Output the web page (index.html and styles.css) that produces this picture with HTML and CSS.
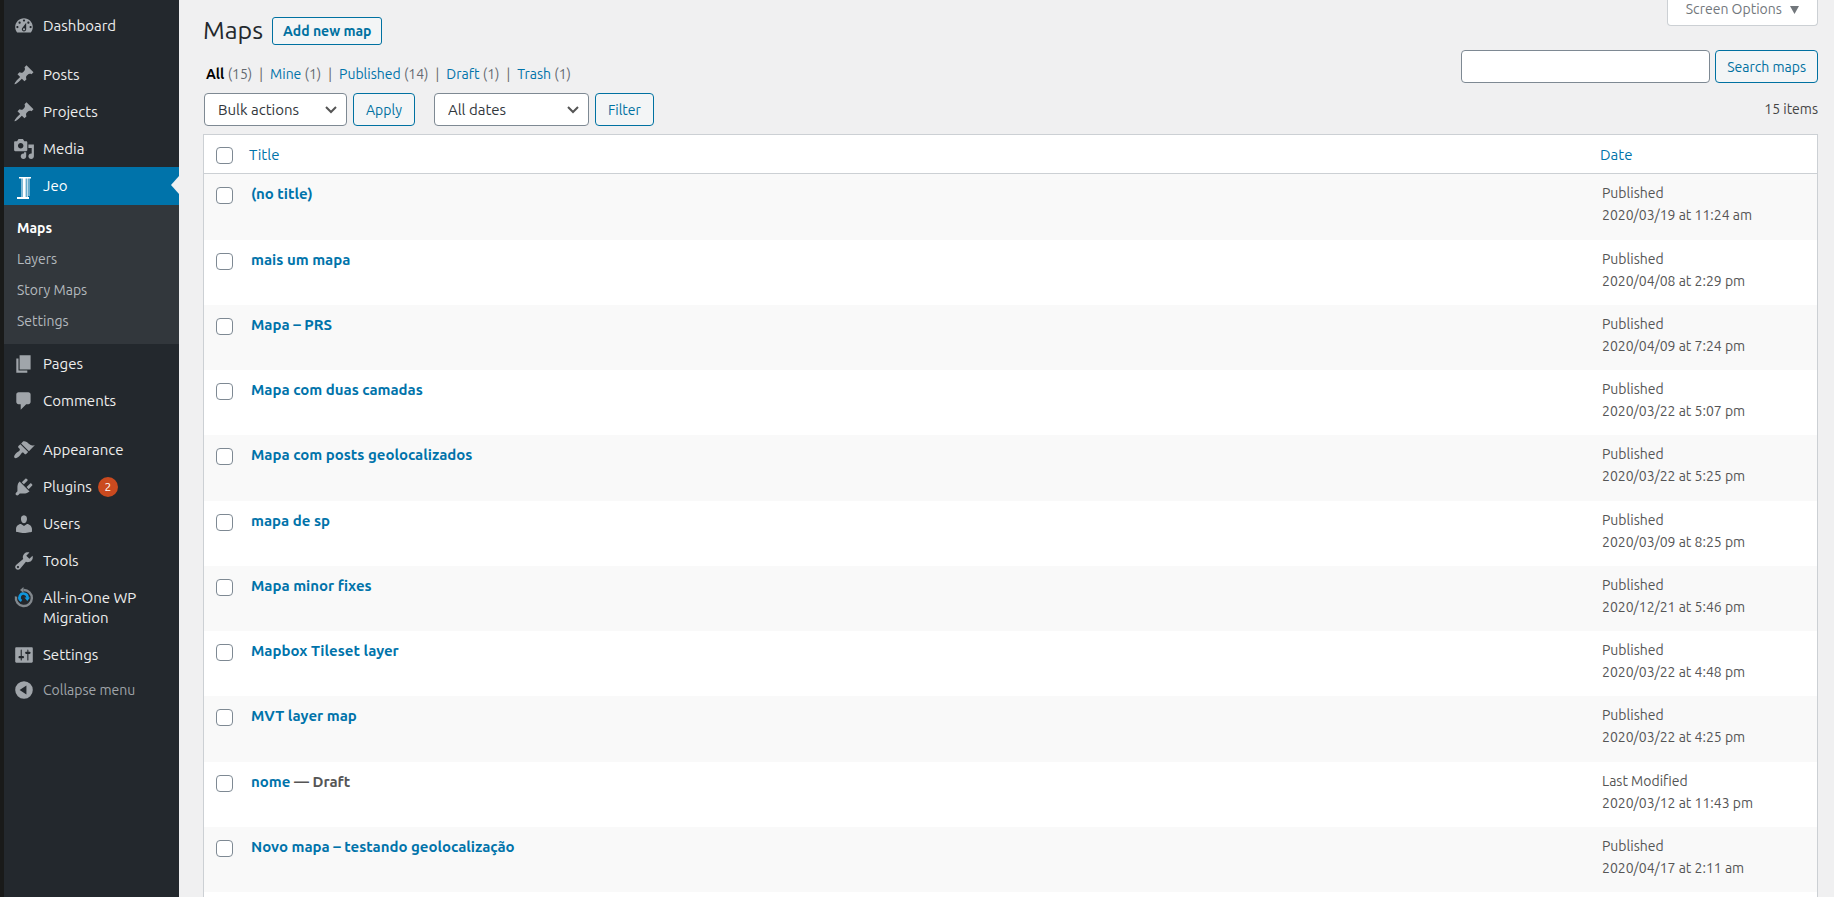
FILE: index.html
```html
<!DOCTYPE html>
<html lang="en">
<head>
<meta charset="utf-8">
<title>Maps</title>
<link rel="stylesheet" href="styles.css">
</head>
<body>
<div class="shell">
  <nav class="sidebar" aria-label="Main menu">
    <ul class="menu">
      <li><a class="menu-link" href="#"><svg class="icon" viewBox="0 0 20 20"><path d="M3.76 16h12.48c1.1-1.37 1.76-3.11 1.76-5 0-4.42-3.58-8-8-8s-8 3.58-8 8c0 1.89.66 3.63 1.76 5zM10 4c.55 0 1 .45 1 1s-.45 1-1 1-1-.45-1-1 .45-1 1-1zM6 6c.55 0 1 .45 1 1s-.45 1-1 1-1-.45-1-1 .45-1 1-1zm8 0c.55 0 1 .45 1 1s-.45 1-1 1-1-.45-1-1 .45-1 1-1zm-5.37 5.55L12 7v6c0 1.1-.9 2-2 2s-2-.9-2-2c0-.57.24-1.08.63-1.45zM4 10c.55 0 1 .45 1 1s-.45 1-1 1-1-.45-1-1 .45-1 1-1zm12 0c.55 0 1 .45 1 1s-.45 1-1 1-1-.45-1-1 .45-1 1-1zm-5 3c0-.55-.45-1-1-1s-1 .45-1 1 .45 1 1 1 1-.45 1-1z"/></svg><span>Dashboard</span></a></li>
      <li class="separated"><a class="menu-link" href="#"><svg class="icon" viewBox="0 0 20 20"><path d="M10.44 3.02l1.82-1.82 6.36 6.35-1.83 1.82c-1.05-.68-2.48-.57-3.41.36l-.75.75c-.92.93-1.04 2.35-.35 3.41l-1.83 1.82-2.41-2.41-2.8 2.79c-.42.42-3.38 2.71-3.8 2.29s1.86-3.39 2.28-3.81l2.79-2.79L4.1 9.36l1.83-1.82c1.05.69 2.48.57 3.4-.36l.75-.75c.93-.92 1.05-2.35.36-3.41z"/></svg><span>Posts</span></a></li>
      <li><a class="menu-link" href="#"><svg class="icon" viewBox="0 0 20 20"><path d="M10.44 3.02l1.82-1.82 6.36 6.35-1.83 1.82c-1.05-.68-2.48-.57-3.41.36l-.75.75c-.92.93-1.04 2.35-.35 3.41l-1.83 1.82-2.41-2.41-2.8 2.79c-.42.42-3.38 2.71-3.8 2.29s1.86-3.39 2.28-3.81l2.79-2.79L4.1 9.36l1.83-1.82c1.05.69 2.48.57 3.4-.36l.75-.75c.93-.92 1.05-2.35.36-3.41z"/></svg><span>Projects</span></a></li>
      <li><a class="menu-link" href="#"><svg class="icon" viewBox="0 0 20 20"><path d="M13 11V4c0-.55-.45-1-1-1h-1.67L9 1H5L3.67 3H2c-.55 0-1 .45-1 1v7c0 .55.45 1 1 1h10c.55 0 1-.45 1-1zM7 4.5c1.38 0 2.5 1.12 2.5 2.5S8.38 9.5 7 9.5 4.5 8.38 4.5 7 5.62 4.5 7 4.5zM14 6h5v10.5c0 1.38-1.12 2.5-2.5 2.5S14 17.88 14 16.5s1.12-2.5 2.5-2.5c.17 0 .34.02.5.05V9h-3V6zm-4 8.05V13h2v3.5c0 1.38-1.12 2.5-2.5 2.5S7 17.88 7 16.5 8.12 14 9.5 14c.17 0 .34.02.5.05z"/></svg><span>Media</span></a></li>
      <li>
        <a class="menu-link current" href="#"><svg class="icon" viewBox="0 0 22 24"><g fill="#fff"><path d="M6 2h12v1.500H6zM4 22h12v2H4z"/><path d="M8 3h2v19H8z" opacity=".5"/><path d="M10 3h2v19h-2z"/><path d="M12 3h1v19h-1zM14 3h1v19h-1z" opacity=".75"/><path d="M13 3h1v19h-1zM15 3h2v18h-2z" opacity=".4"/></g></svg><span>Jeo</span></a>
        <ul class="submenu">
          <li><a class="selected" href="#">Maps</a></li>
          <li><a href="#">Layers</a></li>
          <li><a href="#">Story Maps</a></li>
          <li><a href="#">Settings</a></li>
        </ul>
      </li>
      <li><a class="menu-link" href="#"><svg class="icon" viewBox="0 0 20 20"><path d="M6 15V2h10v13H6zm-1 1h8v2H3V5h2v11z"/></svg><span>Pages</span></a></li>
      <li><a class="menu-link" href="#"><svg class="icon" viewBox="0 0 20 20"><path d="M5 2h9c1.1 0 2 .9 2 2v7c0 1.1-.9 2-2 2h-2l-5 5v-5H5c-1.1 0-2-.9-2-2V4c0-1.1.9-2 2-2z"/></svg><span>Comments</span></a></li>
      <li class="separated"><a class="menu-link" href="#"><svg class="icon" viewBox="0 0 20 20"><path d="M14.48 11.06L7.41 3.99l1.5-1.5c.5-.56 2.3-.47 3.51.32 1.21.8 1.43 1.28 2.91 2.1 1.18.64 2.45 1.26 4.45.85zm-.71.71L6.7 4.7 4.93 6.47c-.39.39-.39 1.02 0 1.41l1.06 1.06c.39.39.39 1.03 0 1.42-.6.6-1.43 1.11-2.21 1.69-.35.26-.7.53-1.01.84C1.43 14.23.4 16.08 1.4 17.07c.99 1 2.84-.03 4.18-1.36.31-.31.58-.66.85-1.02.57-.78 1.08-1.61 1.69-2.21.39-.39 1.02-.39 1.41 0l1.06 1.06c.39.39 1.02.39 1.41 0z"/></svg><span>Appearance</span></a></li>
      <li><a class="menu-link" href="#"><svg class="icon" viewBox="0 0 20 20"><path d="M13.11 4.36L9.87 7.6 8 5.73l3.24-3.24c.35-.34 1.05-.2 1.56.32.52.51.66 1.21.31 1.55zm-8 1.77l.91-1.12 9.01 9.01-1.19.84c-.71.71-2.63 1.16-3.82 1.16H6.14L4.9 17.26c-.59.59-1.54.59-2.12 0-.59-.58-.59-1.53 0-2.12l1.24-1.24v-3.88c0-1.13.4-3.19 1.09-3.89zm7.26 3.97l3.24-3.24c.34-.35 1.04-.21 1.55.31.52.51.66 1.21.31 1.55l-3.24 3.25z"/></svg><span>Plugins</span><span class="badge">2</span></a></li>
      <li><a class="menu-link" href="#"><svg class="icon" viewBox="0 0 20 20"><path d="M10 9.25c-2.27 0-2.73-3.44-2.73-3.44C7 4.02 7.82 2 9.97 2c2.16 0 2.98 2.02 2.71 3.81 0 0-.41 3.44-2.68 3.44zm0 2.57L12.72 10c2.39 0 4.52 2.33 4.52 4.53v2.49s-3.65 1.13-7.24 1.13c-3.65 0-7.24-1.13-7.24-1.13v-2.49c0-2.25 1.94-4.48 4.47-4.48z"/></svg><span>Users</span></a></li>
      <li><a class="menu-link" href="#"><svg class="icon" viewBox="0 0 20 20"><path d="M16.68 9.77c-1.34 1.34-3.3 1.67-4.95.99l-5.41 6.52c-.99.99-2.59.99-3.58 0s-.99-2.59 0-3.57l6.52-5.42c-.68-1.65-.35-3.61.99-4.95 1.28-1.28 3.12-1.62 4.72-1.06l-2.89 2.89 2.82 2.82 2.86-2.87c.53 1.58.18 3.39-1.08 4.65zM3.81 16.21c.4.39 1.04.39 1.43 0 .4-.4.4-1.04 0-1.43-.39-.4-1.03-.4-1.43 0-.39.39-.39 1.03 0 1.43z"/></svg><span>Tools</span></a></li>
      <li><a class="menu-link" href="#"><svg class="icon" viewBox="0 0 22 22"><g fill="none"><path d="M10.500 3A8 8 0 1 1 3 9.500" stroke="#82888d" stroke-width="2.400"/><path d="M8.500 14A4 4 0 1 1 14.500 11" stroke="#0e96dc" stroke-width="2.600"/></g><path d="M10.500 0v6L7 3z" fill="#82888d"/><path d="M11.500 10.500h5.500l-2.700 3.500z" fill="#0e96dc"/></svg><span>All-in-One WP Migration</span></a></li>
      <li><a class="menu-link" href="#"><svg class="icon" viewBox="0 0 20 20"><path d="M18 16V4c0-.55-.45-1-1-1H3c-.55 0-1 .45-1 1v12c0 .55.45 1 1 1h14c.55 0 1-.45 1-1zM8 11h1c.55 0 1 .45 1 1s-.45 1-1 1H8v1.5c0 .28-.22.5-.5.5s-.5-.22-.5-.5V13H6c-.55 0-1-.45-1-1s.45-1 1-1h1V5.500c0-.28.22-.5.5-.5s.5.22.5.5V11zm5-2h-1c-.55 0-1-.45-1-1s.45-1 1-1h1V5.500c0-.28.22-.5.5-.5s.5.22.5.5V7h1c.55 0 1 .45 1 1s-.45 1-1 1h-1v5.500c0 .28-.22.5-.5.5s-.5-.22-.5-.5V9z"/></svg><span>Settings</span></a></li>
    </ul>
    <button class="collapse" type="button"><svg class="icon" viewBox="0 0 20 20"><path fill-rule="evenodd" d="M10 2a8 8 0 1 1 0 16 8 8 0 0 1 0-16zm2.200 4L6 10l6.200 4z"/></svg><span>Collapse menu</span></button>
  </nav>

  <main class="content">
    <header class="top">
      <div class="heading">
        <h1>Maps</h1>
        <a class="button add" href="#">Add new map</a>
      </div>
      <button class="screen-options" type="button">Screen Options <svg class="caret" viewBox="0 0 9 8"><path d="M0 0h9L4.500 8z"/></svg></button>
    </header>

    <div class="views-row">
      <ul class="views">
        <li><a class="active" href="#">All <span>(15)</span></a></li>
        <li><a href="#">Mine <span>(1)</span></a></li>
        <li><a href="#">Published <span>(14)</span></a></li>
        <li><a href="#">Draft <span>(1)</span></a></li>
        <li><a href="#">Trash <span>(1)</span></a></li>
      </ul>
      <form class="search">
        <input type="search" class="search-box" aria-label="Search maps">
        <button class="button" type="button">Search maps</button>
      </form>
    </div>

    <div class="actions">
      <div class="group">
        <select class="select bulk" aria-label="Bulk actions"><option>Bulk actions</option></select>
        <button class="button" type="button">Apply</button>
      </div>
      <div class="group">
        <select class="select dates" aria-label="Filter by date"><option>All dates</option></select>
        <button class="button" type="button">Filter</button>
      </div>
      <span class="count">15 items</span>
    </div>

    <table class="list">
      <thead>
        <tr><th class="check"><input type="checkbox" aria-label="Select all"></th><th><a href="#">Title</a></th><th class="date"><a href="#">Date</a></th></tr>
      </thead>
      <tbody>
        <tr><td class="check"><input type="checkbox" aria-label="Select (no title)"></td><td class="title"><a href="#">(no title)</a></td><td class="date">Published<br>2020/03/19 at 11:24 am</td></tr>
        <tr><td class="check"><input type="checkbox" aria-label="Select mais um mapa"></td><td class="title"><a href="#">mais um mapa</a></td><td class="date">Published<br>2020/04/08 at 2:29 pm</td></tr>
        <tr><td class="check"><input type="checkbox" aria-label="Select Mapa – PRS"></td><td class="title"><a href="#">Mapa – PRS</a></td><td class="date">Published<br>2020/04/09 at 7:24 pm</td></tr>
        <tr><td class="check"><input type="checkbox" aria-label="Select Mapa com duas camadas"></td><td class="title"><a href="#">Mapa com duas camadas</a></td><td class="date">Published<br>2020/03/22 at 5:07 pm</td></tr>
        <tr><td class="check"><input type="checkbox" aria-label="Select Mapa com posts geolocalizados"></td><td class="title"><a href="#">Mapa com posts geolocalizados</a></td><td class="date">Published<br>2020/03/22 at 5:25 pm</td></tr>
        <tr><td class="check"><input type="checkbox" aria-label="Select mapa de sp"></td><td class="title"><a href="#">mapa de sp</a></td><td class="date">Published<br>2020/03/09 at 8:25 pm</td></tr>
        <tr><td class="check"><input type="checkbox" aria-label="Select Mapa minor fixes"></td><td class="title"><a href="#">Mapa minor fixes</a></td><td class="date">Published<br>2020/12/21 at 5:46 pm</td></tr>
        <tr><td class="check"><input type="checkbox" aria-label="Select Mapbox Tileset layer"></td><td class="title"><a href="#">Mapbox Tileset layer</a></td><td class="date">Published<br>2020/03/22 at 4:48 pm</td></tr>
        <tr><td class="check"><input type="checkbox" aria-label="Select MVT layer map"></td><td class="title"><a href="#">MVT layer map</a></td><td class="date">Published<br>2020/03/22 at 4:25 pm</td></tr>
        <tr><td class="check"><input type="checkbox" aria-label="Select nome"></td><td class="title"><a href="#">nome</a> — Draft</td><td class="date">Last Modified<br>2020/03/12 at 11:43 pm</td></tr>
        <tr><td class="check"><input type="checkbox" aria-label="Select Novo mapa – testando geolocalização"></td><td class="title"><a href="#">Novo mapa – testando geolocalização</a></td><td class="date">Published<br>2020/04/17 at 2:11 am</td></tr>
        <tr><td></td><td></td><td></td></tr>
      </tbody>
    </table>
  </main>
</div>
</body>
</html>
```
FILE: styles.css
```css
* { box-sizing: border-box; }

body {
  margin: 0;
  background: #f0f0f1;
  color: #555;
  font: 14px/22px Ubuntu, "Noto Sans", sans-serif;
}

a { color: #0073aa; text-decoration: none; }
ul { list-style: none; margin: 0; padding: 0; }
button, input, select { font: inherit; margin: 0; }
button { cursor: pointer; }

.shell { display: flex; height: 100vh; overflow: hidden; }

/* Sidebar */
.sidebar {
  flex: 0 0 179px;
  border-left: 4px solid #191a19;
  background: #23282d;
  padding-top: 7px;
}
.separated { margin-top: 12px; }
.menu-link {
  position: relative;
  display: flex;
  align-items: flex-start;
  gap: 8px;
  padding: 9px 16px 8px 9px;
  color: #eee;
  font-size: 15px;
  line-height: 20px;
}
.icon { flex: none; width: 22px; height: 22px; margin: -1px 0; fill: #a0a5aa; }
.current { background: #0073aa; color: #fff; padding-bottom: 9px; }
.current .icon { height: 24px; margin-bottom: -3px; }
.current::after {
  content: "";
  position: absolute;
  right: 0;
  top: 9px;
  border: 9px solid transparent;
  border-left: 0;
  border-right: 8px solid #f0f0f1;
}
.submenu { background: #32373c; margin-bottom: 1px; padding: 8px 0 7px; }
.submenu a { display: block; padding: 5px 13px 6px; line-height: 20px; color: #b4b9be; }
.submenu .selected { color: #fff; font-weight: 600; }
.badge {
  width: 20px;
  height: 20px;
  margin-left: -2px;
  border-radius: 10px;
  background: #ca4a1f;
  color: #fff;
  font-size: 12px;
  text-align: center;
}
.collapse {
  display: flex;
  gap: 8px;
  padding: 7px 9px;
  border: 0;
  background: none;
  color: #a0a5aa;
  line-height: 20px;
}

/* Page head */
.content { flex: 1; min-width: 0; padding: 0 16px 0 24px; }
.top { display: flex; justify-content: space-between; align-items: flex-start; height: 50px; }
.heading { display: flex; align-items: flex-end; gap: 9px; padding-top: 15px; }
h1 { margin: 0; color: #23282d; font-size: 25px; font-weight: 400; line-height: 30px; }
.button {
  height: 33px;
  padding: 0 12px;
  border: 1px solid #0071a1;
  border-radius: 4px;
  background: #f3f5f6;
  color: #0071a1;
  white-space: nowrap;
}
.add { height: 28px; padding: 0 10px; border-radius: 3px; font-weight: 600; line-height: 26px; }
.screen-options {
  height: 26px;
  padding: 0 18px 8px 18px;
  border: 1px solid #ccd0d4;
  border-top: 0;
  border-radius: 0 0 4px 4px;
  background: #fff;
  color: #72777c;
  line-height: 18px;
}
.caret { width: 9px; height: 8px; margin-left: 5px; fill: #72777c; }

/* Filters */
.views-row { display: flex; justify-content: space-between; align-items: flex-end; }
.views { display: flex; padding-left: 3px; line-height: 17px; }
.views li + li::before { content: "|"; margin: 0 7px; color: #666; }
.views span { color: #646970; font-weight: 400; }
.views .active { color: #000; font-weight: 600; }
.search { display: flex; gap: 5px; }
.search-box { width: 249px; height: 33px; border: 1px solid #7e8993; border-radius: 4px; background: #fff; }
.search .button { padding: 0 11px; }
.actions { display: flex; gap: 19px; padding: 10px 0 8px 1px; }
.group { display: flex; gap: 6px; }
.select {
  appearance: none;
  height: 33px;
  padding: 0 26px 0 13px;
  border: 1px solid #7e8993;
  border-radius: 4px;
  background: #fff url('data:image/svg+xml,<svg xmlns="http://www.w3.org/2000/svg" viewBox="0 0 12 8"><path d="M1 1l5 5 5-5" fill="none" stroke="%23555" stroke-width="2"/></svg>') no-repeat right 9px center / 12px 8px;
  color: #32373c;
  font-size: 15px;
}
.bulk { width: 143px; }
.dates { width: 155px; }
.count { margin-left: auto; line-height: 33px; color: #444; }

/* Table */
.list {
  width: 100%;
  table-layout: fixed;
  border: 1px solid #ccd0d4;
  border-collapse: separate;
  border-spacing: 0;
  background: #fff;
}
.list th { height: 39px; padding: 1px 0 0 9px; border-bottom: 1px solid #ccd0d4; font-size: 15px; font-weight: 400; text-align: left; }
.list td { height: 65px; padding: 8px 0 0 11px; vertical-align: top; }
.list tr:nth-child(4n+1) td { height: 66px; }
.list tbody tr:nth-child(odd) { background: #f9f9f9; }
.list .check { width: 36px; padding-left: 12px; }
.list td.check { padding-top: 13px; }
.list .date { width: 226px; }
.list .title { font-size: 15px; font-weight: 600; padding-top: 9px; }
.list input {
  appearance: none;
  display: block;
  width: 17px;
  height: 17px;
  border: 1px solid #7e8993;
  border-radius: 4px;
  background: #fff;
}
.list th input { margin-top: 2px; }
```
